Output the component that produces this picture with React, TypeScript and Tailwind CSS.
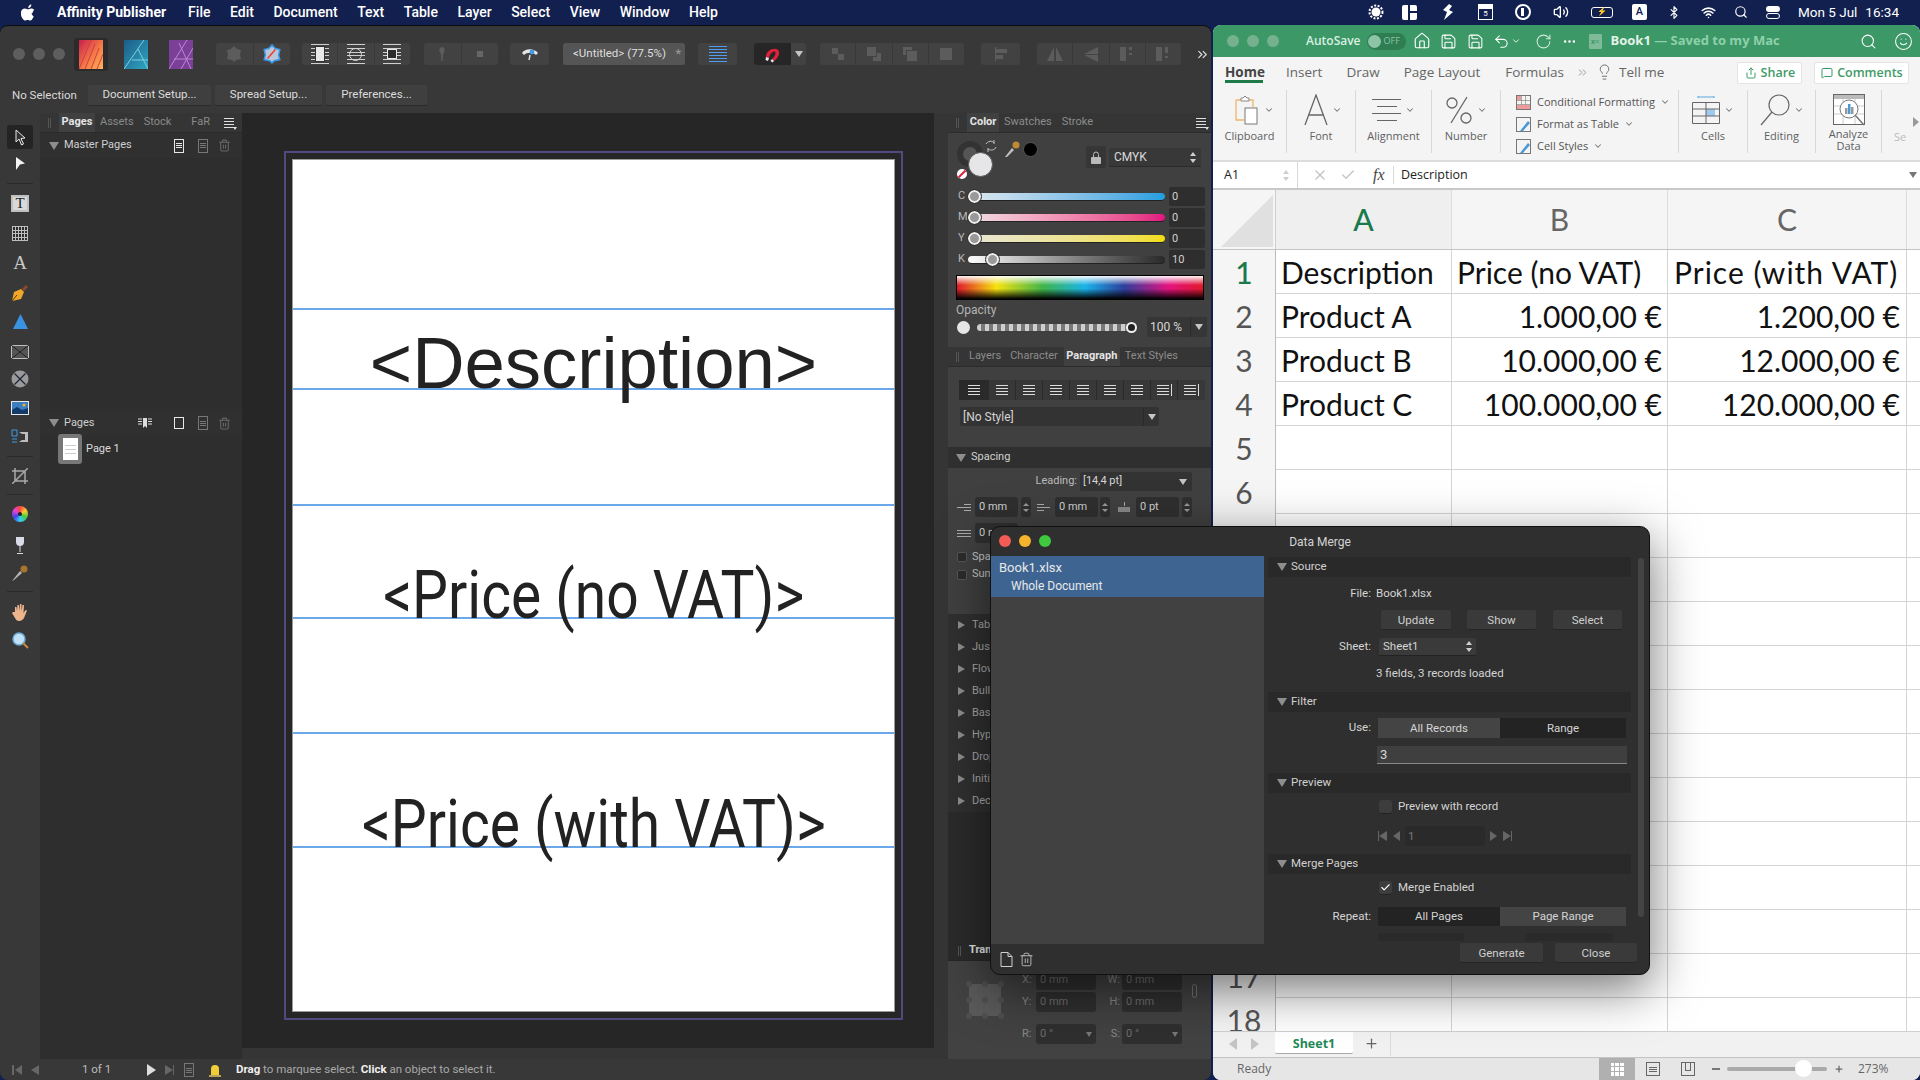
import type { ReactNode } from "react";
import {
  Bluetooth,
  Check,
  ChevronDown,
  ChevronsRight,
  Home,
  Lightbulb,
  MessageSquare,
  MoreHorizontal,
  Plus,
  RotateCw,
  Save,
  Search,
  Share,
  Smile,
  Trash2,
  Undo2,
  Volume2,
  Wifi,
  X,
} from "lucide-react";

const menus = ["File", "Edit", "Document", "Text", "Table", "Layer", "Select", "View", "Window", "Help"];

function Tri({ open = true }: { open?: boolean }) {
  return open ? (
    <div className="w-0 h-0 border-x-[5px] border-x-transparent border-t-[8px] border-t-[#8e8e8e]" />
  ) : (
    <div className="w-0 h-0 border-y-[4px] border-y-transparent border-l-[7px] border-l-[#8e8e8e]" />
  );
}

function SmallDown() {
  return <div className="w-0 h-0 border-x-[4px] border-x-transparent border-t-[6px] border-t-[#c4c4c4]" />;
}

function Stepper() {
  return (
    <div className="flex flex-col items-center justify-center gap-[3px] w-[10px] h-[20px] rounded-[3px] bg-[#303030]">
      <div className="w-0 h-0 border-x-[3px] border-x-transparent border-b-[3px] border-b-[#9a9a9a]" />
      <div className="w-0 h-0 border-x-[3px] border-x-transparent border-t-[3px] border-t-[#9a9a9a]" />
    </div>
  );
}

function UpDown() {
  return (
    <div className="flex flex-col items-center gap-[3px]">
      <div className="w-0 h-0 border-x-[3px] border-x-transparent border-b-[4px] border-b-[#cfcfcf]" />
      <div className="w-0 h-0 border-x-[3px] border-x-transparent border-t-[4px] border-t-[#cfcfcf]" />
    </div>
  );
}

function MenuIcon() {
  return (
    <div className="relative flex flex-col gap-[2px] w-[10px]">
      <div className="h-[1px] bg-[#e0e0e0]" />
      <div className="h-[1px] bg-[#e0e0e0]" />
      <div className="h-[1px] bg-[#e0e0e0]" />
      <div className="h-[1px] bg-[#e0e0e0]" />
      <div className="absolute -right-[3px] -bottom-[2px] w-0 h-0 border-x-[2px] border-x-transparent border-t-[3px] border-t-[#e0e0e0]" />
    </div>
  );
}

function PublisherLogo() {
  return (
    <svg width="24" height="29" viewBox="0 0 24 29">
      <defs>
        <linearGradient id="pub" x1="0" y1="0" x2="1" y2="1">
          <stop offset="0" stopColor="#c81e4e" />
          <stop offset=".55" stopColor="#f47a45" />
          <stop offset="1" stopColor="#ffb55a" />
        </linearGradient>
      </defs>
      <rect width="24" height="29" fill="url(#pub)" />
      <path d="M0 29 L12 0 M6 29 L16 4 M12 29 L20 8 M18 29 L24 14" stroke="#d8384a" strokeWidth="1" />
    </svg>
  );
}

function DesignerLogo() {
  return (
    <svg width="24" height="29" viewBox="0 0 24 29">
      <defs>
        <linearGradient id="des" x1="0" y1="0" x2="1" y2="1">
          <stop offset="0" stopColor="#1c5c86" />
          <stop offset="1" stopColor="#2fa6c4" />
        </linearGradient>
      </defs>
      <rect width="24" height="29" fill="url(#des)" />
      <path d="M0 29 L20 0 M8 20 L24 20 M14 9 L24 29" stroke="#7fd0dc" strokeWidth="1" fill="none" />
    </svg>
  );
}

function PhotoLogo() {
  return (
    <svg width="24" height="29" viewBox="0 0 24 29">
      <rect width="24" height="29" fill="#7b3f9a" />
      <path d="M0 29 L18 0 M5 19 L24 19 M10 3 L22 29 M24 8 L12 29" stroke="#b88ad0" strokeWidth="1" fill="none" />
    </svg>
  );
}

function Seg({ className, children }: { className: string; children: ReactNode }) {
  return <div className={`flex h-[22px] rounded-[3px] bg-[#424242] divide-x divide-[#383838] ${className}`}>{children}</div>;
}

function SegCell({ children }: { children?: ReactNode }) {
  return <div className="flex-1 flex items-center justify-center">{children}</div>;
}

function Lines({ children }: { children?: ReactNode }) {
  return (
    <div className="relative w-[18px] h-[20px] flex flex-col justify-between">
      {[0, 1, 2, 3, 4, 5].map((i) => (
        <div key={i} className="h-[1px] bg-[#cfcfcf]" />
      ))}
      <div className="absolute inset-0 flex items-center justify-center">{children}</div>
    </div>
  );
}

function Grey({ d }: { d: string }) {
  return (
    <svg width="18" height="18" viewBox="0 0 18 18">
      <path d={d} fill="#5c5c5c" />
    </svg>
  );
}

function Toolbar() {
  return (
    <div className="flex items-center h-[56px] shrink-0">
      <div className="flex gap-[8px] ml-[13px]">
        <div className="w-[12px] h-[12px] rounded-full bg-[#5e5e5e]" />
        <div className="w-[12px] h-[12px] rounded-full bg-[#5e5e5e]" />
        <div className="w-[12px] h-[12px] rounded-full bg-[#5e5e5e]" />
      </div>
      <div className="ml-[9px] w-[34px] h-[33px] rounded-[3px] bg-[#2b2b2b] flex items-center justify-center">
        <PublisherLogo />
      </div>
      <div className="ml-[16px]">
        <DesignerLogo />
      </div>
      <div className="ml-[21px]">
        <PhotoLogo />
      </div>
      <Seg className="ml-[23px] w-[74px]">
        <SegCell>
          <Grey d="M9 1 12 4 16 5 15 10 16 14 11 15 9 17 7 15 2 14 3 10 2 5 6 4Z" />
        </SegCell>
        <SegCell>
          <svg width="20" height="20" viewBox="0 0 18 18">
            <path d="M9 1 12 4 16 5 15 10 16 14 11 15 9 17 7 15 2 14 3 10 2 5 6 4Z" fill="#b9c7d8" stroke="#3a97e8" strokeWidth="1.4" />
            <path d="M5 13 12 5" stroke="#ef3b32" strokeWidth="1.3" />
          </svg>
        </SegCell>
      </Seg>
      <Seg className="ml-[12px] w-[108px]">
        <SegCell>
          <Lines>
            <div className="w-[10px] h-[16px] bg-[#e8e8e8] border border-[#333]" />
          </Lines>
        </SegCell>
        <SegCell>
          <Lines>
            <div className="w-[13px] h-[13px] rounded-full border border-[#d8d8d8]" />
          </Lines>
        </SegCell>
        <SegCell>
          <Lines>
            <div className="w-[10px] h-[10px] bg-[#2c2c2c] border border-[#e8e8e8]" />
          </Lines>
        </SegCell>
      </Seg>
      <Seg className="ml-[14px] w-[74px]">
        <SegCell>
          <Grey d="M9 2a3 3 0 0 1 2 5L10 10 9.6 16 8.4 16 8 10 7 7A3 3 0 0 1 9 2Z" />
        </SegCell>
        <SegCell>
          <div className="w-[6px] h-[6px] bg-[#666]" />
        </SegCell>
      </Seg>
      <Seg className="ml-[12px] w-[39px]">
        <SegCell>
          <svg width="18" height="14" viewBox="0 0 18 14">
            <path d="M1 6C4 1 13 1 17 6L15 8C12 5 6 5 3 8Z" fill="#e4e4e4" />
            <circle cx="11" cy="5" r="2.400" fill="#3f9be8" />
            <path d="M9 8 8 13" stroke="#e4e4e4" strokeWidth="1.4" />
          </svg>
        </SegCell>
      </Seg>
      <div className="ml-[14px] w-[122px] h-[22px] rounded-[3px] bg-[#555] flex items-center justify-between pl-[10px] pr-[4px] font-['Roboto',sans-serif] text-[11.5px] text-[#dedede]">
        <span>&lt;Untitled&gt; (77.5%)</span>
        <span className="text-[#9a9a9a] text-[13px]">*</span>
      </div>
      <Seg className="ml-[13px] w-[39px]">
        <SegCell>
          <div className="flex flex-col gap-[2px] w-[18px]">
            {[0, 1, 2, 3, 4, 5].map((i) => (
              <div key={i} className="h-[1px] bg-[#4f9cf0]" />
            ))}
          </div>
        </SegCell>
      </Seg>
      <div className="ml-[17px] flex h-[22px] w-[52px] rounded-[3px] bg-[#424242] overflow-hidden">
        <div className="w-[37px] bg-[#262626] flex items-center justify-center">
          <svg width="20" height="20" viewBox="0 0 20 20">
            <path d="M3 13C3 5 15 2 16 8c.5 3-2 7-5 9l-2-2c2-2 4-4 3.500-6.500C12 6 7 8 6 14Z" fill="#e2203a" />
            <path d="M3 13l3 1-1 3-2.500-1ZM11 17l-2-2-1.500 2 2 1.500Z" fill="#e9e9e9" />
          </svg>
        </div>
        <div className="flex-1 flex items-center justify-center">
          <SmallDown />
        </div>
      </div>
      <Seg className="ml-[14px] w-[144px]">
        <SegCell>
          <Grey d="M3 3h6v6H3ZM9 9h6v6H9Z" />
        </SegCell>
        <SegCell>
          <Grey d="M2 2h9v9H2ZM12 8h4v8H8v-4h4Z" />
        </SegCell>
        <SegCell>
          <Grey d="M2 2h9v3H5v5H2ZM6 6h10v10H6Z" />
        </SegCell>
        <SegCell>
          <Grey d="M3 3h12v12H3Z" />
        </SegCell>
      </Seg>
      <Seg className="ml-[17px] w-[39px]">
        <SegCell>
          <Grey d="M3 2h1v14H3ZM4 4h11v4H4ZM4 10h7v4H4Z" />
        </SegCell>
      </Seg>
      <Seg className="ml-[17px] w-[144px]">
        <SegCell>
          <Grey d="M8 2v14H1ZM10 2l7 14h-7Z" />
        </SegCell>
        <SegCell>
          <Grey d="M16 2v7H2ZM16 10v7L2 10Z" />
        </SegCell>
        <SegCell>
          <Grey d="M2 2h6v14H2ZM11 2h3v3h-3ZM11 8h3v2h-3Z" />
        </SegCell>
        <SegCell>
          <Grey d="M2 2h6v14H2ZM11 2h3v6h-3ZM11 11h3v2h-3Z" />
        </SegCell>
      </Seg>
      <ChevronsRight className="ml-[14px] w-[15px] h-[15px] text-[#d8d8d8]" />
    </div>
  );
}

function ContextBar() {
  const btn =
    "h-[21px] rounded-[2px] bg-[#3f3f3f] border-b border-[#2a2a2a] flex items-center justify-center font-['Roboto',sans-serif] text-[11.5px] text-[#dcdcdc]";
  return (
    <div className="flex h-[31px] pt-[3px] shrink-0 font-['Roboto',sans-serif] text-[11.5px] text-[#d8d8d8]">
      <div className="w-[88px] pl-[12px] leading-[21px] whitespace-nowrap">No Selection</div>
      <div className={`${btn} w-[123px]`}>Document Setup...</div>
      <div className={`${btn} w-[107px] ml-[4px]`}>Spread Setup...</div>
      <div className={`${btn} w-[101px] ml-[4px]`}>Preferences...</div>
    </div>
  );
}

function ToolSlot({ children, h = "h-[29px]" }: { children: ReactNode; h?: string }) {
  return <div className={`${h} flex items-center justify-center shrink-0`}>{children}</div>;
}

function ToolSep({ className }: { className: string }) {
  return <div className={`mx-[7px] h-[1px] bg-[#2a2a2a] shrink-0 ${className}`} />;
}

function Tools() {
  return (
    <div className="w-[40px] shrink-0 bg-[#383838] flex flex-col pt-[12px]">
      <div className="mx-[7px] h-[24px] rounded-[3px] bg-[#242424] flex items-center justify-center shrink-0">
        <svg width="12" height="17" viewBox="0 0 12 17">
          <path d="M2 1 2 13 5 10 7.500 16 9.500 15 7 9.500 11 9Z" fill="#333" stroke="#e8e8e8" />
        </svg>
      </div>
      <ToolSlot>
        <svg width="9" height="13" viewBox="0 0 9 13">
          <path d="M0 0 9 6.500 4 7.500 0 13Z" fill="#f4f4f4" />
        </svg>
      </ToolSlot>
      <ToolSep className="mt-[5px]" />
      <ToolSlot h="h-[39px]">
        <div className="w-[18px] h-[17px] border-2 border-[#bfbfbf] bg-[#d9d9d9] flex items-center justify-center font-['Liberation_Serif',serif] text-[15px] leading-none text-[#222]">
          T
        </div>
      </ToolSlot>
      <ToolSlot h="h-[21px]">
        <div className="grid grid-cols-5 gap-[1px] w-[16px] h-[15px] bg-[#bdbdbd] border border-[#bdbdbd]">
          {Array.from({ length: 20 }).map((_, i) => (
            <div key={i} className="bg-[#2c2c2c]" />
          ))}
        </div>
      </ToolSlot>
      <ToolSlot h="h-[39px]">
        <span className="font-['Liberation_Serif',serif] text-[19px] text-[#c8c8c8]">A</span>
      </ToolSlot>
      <ToolSlot h="h-[20px]">
        <svg width="18" height="18" viewBox="0 0 18 18">
          <path d="M1 17 3 8 10 5 13 8 10 15Z" fill="#f0a72a" />
          <path d="M1 17 6 11" stroke="#5a3a10" />
          <path d="M11 5 15 1 17 3 13 7Z" fill="#8a4a2a" />
        </svg>
      </ToolSlot>
      <ToolSlot h="h-[37px]">
        <svg width="15" height="15" viewBox="0 0 15 15">
          <path d="M7.500 0 15 15H0Z" fill="#3a93e0" />
        </svg>
      </ToolSlot>
      <ToolSlot h="h-[24px]">
        <svg width="18" height="14" viewBox="0 0 18 14">
          <rect x=".5" y=".5" width="17" height="13" fill="#555" stroke="#bdbdbd" />
          <path d="M0 0 18 14M18 0 0 14" stroke="#222" />
        </svg>
      </ToolSlot>
      <ToolSlot>
        <svg width="18" height="18" viewBox="0 0 18 18">
          <circle cx="9" cy="9" r="8.500" fill="#9a9a9a" />
          <path d="M3.500 3.500 14.500 14.500M14.500 3.500 3.500 14.500" stroke="#1d2238" strokeWidth="1.200" />
        </svg>
      </ToolSlot>
      <ToolSlot>
        <svg width="18" height="14" viewBox="0 0 18 14">
          <rect width="18" height="14" fill="#e8e8e8" />
          <rect x="1" y="1" width="16" height="12" fill="#3b7fc0" />
          <path d="M1 9 6 6 11 9 17 7V13H1Z" fill="#123a6a" />
          <circle cx="13" cy="4" r="1.500" fill="#f5b42c" />
        </svg>
      </ToolSlot>
      <ToolSlot>
        <svg width="18" height="16" viewBox="0 0 18 16">
          <path d="M1 1h5v6H1ZM1 10h5M1 13h5" fill="none" stroke="#3f9be8" />
          <path d="M8 3h9v10H8l3-2 3 0V5H11Z" fill="#bdbdbd" />
        </svg>
      </ToolSlot>
      <ToolSep className="mt-[5px]" />
      <ToolSlot h="h-[37px]">
        <svg width="16" height="16" viewBox="0 0 16 16" fill="none" stroke="#a8a8a8" strokeWidth="1.500">
          <path d="M3 0V13H16M0 3H13V16M0 16 16 0" />
        </svg>
      </ToolSlot>
      <ToolSep />
      <ToolSlot h="h-[38px]">
        <div className="w-[16px] h-[16px] rounded-full bg-[conic-gradient(#f44,#fc3,#4c4,#3cf,#44d,#d4d,#f44)] flex items-center justify-center">
          <div className="w-[4px] h-[4px] rounded-full bg-[#222]" />
        </div>
      </ToolSlot>
      <ToolSlot h="h-[26px]">
        <svg width="10" height="18" viewBox="0 0 10 18">
          <path d="M1 0H9V5C9 8 7 9 5 9S1 8 1 5ZM4.500 9H5.500V15H4.500ZM2 16H8V17H2Z" fill="#d8dbe8" />
        </svg>
      </ToolSlot>
      <ToolSlot h="h-[28px]">
        <svg width="16" height="16" viewBox="0 0 16 16">
          <path d="M0 16 8 6 10 8 2 15Z" fill="#b5b5b5" />
          <circle cx="12" cy="4" r="3.500" fill="#a8752c" />
        </svg>
      </ToolSlot>
      <ToolSep className="mt-[4px]" />
      <ToolSlot h="h-[39px]">
        <svg width="17" height="18" viewBox="0 0 17 18">
          <path d="M3 9V4h1.500l.5 4 .5-6H7l.5 6 .5-7h1.500v7l1-6h1.500l-.5 8 2-3 1.500.5L12 15c-1 2-3 3-5 3s-3-1-4-3L0 10l1-1Z" fill="#eeb48c" />
        </svg>
      </ToolSlot>
      <ToolSlot h="h-[18px]">
        <svg width="17" height="17" viewBox="0 0 17 17">
          <circle cx="7" cy="7" r="6" fill="#bfe0f5" stroke="#6aa9d8" strokeWidth="1.500" />
          <path d="M11 11 16 16" stroke="#c98a3c" strokeWidth="2" />
        </svg>
      </ToolSlot>
    </div>
  );
}

function PageIcon({ dim }: { dim?: boolean }) {
  return (
    <div className={`w-[10px] h-[14px] border flex flex-col gap-[1px] justify-center px-[1px] ${dim ? "border-[#777]" : "border-[#e6e6e6]"}`}>
      <div className={`h-[1px] ${dim ? "bg-[#777]" : "bg-[#e6e6e6]"}`} />
      <div className={`h-[1px] ${dim ? "bg-[#777]" : "bg-[#e6e6e6]"}`} />
      <div className={`h-[1px] ${dim ? "bg-[#777]" : "bg-[#e6e6e6]"}`} />
    </div>
  );
}

function LeftPanel() {
  return (
    <div className="w-[202px] shrink-0 bg-[#2e2e2e] flex flex-col font-['Roboto',sans-serif] text-[11px] text-[#cfcfcf]">
      <div className="h-[20px] bg-[#353535] border-b border-[#2a2a2a] flex items-center shrink-0 text-[#8a8a8a]">
        <div className="ml-[8px] w-[3px] h-[10px] border-x border-[#555]" />
        <div className="ml-[8px] w-[36px] h-full bg-[#404040] flex items-center justify-center font-bold text-[#e4e4e4]">Pages</div>
        <span className="ml-[5px]">Assets</span>
        <span className="ml-[10px]">Stock</span>
        <span className="ml-[20px]">FaR</span>
        <div className="ml-[14px]">
          <MenuIcon />
        </div>
      </div>
      <div className="h-[25px] bg-[#303030] flex items-center shrink-0">
        <div className="ml-[9px]">
          <Tri />
        </div>
        <span className="ml-[5px] w-[110px] whitespace-nowrap">Master Pages</span>
        <PageIcon />
        <div className="ml-[14px]">
          <PageIcon dim />
        </div>
        <Trash2 className="ml-[10px] w-[13px] h-[13px] text-[#666]" />
      </div>
      <div className="h-[253px] shrink-0" />
      <div className="h-[24px] bg-[#303030] flex items-center shrink-0">
        <div className="ml-[9px]">
          <Tri />
        </div>
        <span className="ml-[5px] w-[59px]">Pages</span>
        <svg width="14" height="10" viewBox="0 0 14 10" className="ml-[15px]">
          <path d="M0 1h4M0 3.500h4M0 6h4M10 1h4M10 3.500h4M10 6h4" stroke="#ddd" />
          <path d="M5 0h4v10l-2-2-2 2Z" fill="#ddd" />
        </svg>
        <div className="ml-[22px] w-[10px] h-[12px] border border-[#e8e8e8]" />
        <div className="ml-[14px]">
          <PageIcon dim />
        </div>
        <Trash2 className="ml-[10px] w-[13px] h-[13px] text-[#666]" />
      </div>
      <div className="flex items-center mt-[-1px] pl-[18px]">
        <div className="w-[24px] h-[30px] rounded-[3px] bg-[#777] flex items-center justify-center">
          <div className="w-[15px] h-[22px] bg-white flex flex-col justify-center gap-[3px] px-[2px]">
            <div className="h-[1px] bg-[#ccc]" />
            <div className="h-[1px] bg-[#ccc]" />
            <div className="h-[1px] bg-[#ccc]" />
          </div>
        </div>
        <span className="ml-[4px] text-[#dcdcdc]">Page 1</span>
      </div>
    </div>
  );
}

function TextFrame({ className, children }: { className: string; children: ReactNode }) {
  return (
    <div className={`border-y-2 border-[#6aa8ea] flex items-end justify-center whitespace-nowrap ${className}`}>
      {children}
    </div>
  );
}

function Canvas() {
  return (
    <div className="w-[692px] h-[935px] shrink-0 bg-[#262626] pl-[42px] pt-[38px]">
      <div className="w-[619px] h-[869px] border-2 border-[#4f4a80] p-[6px]">
        <div className="h-[853px] bg-white border border-[#999] overflow-hidden flex flex-col text-[#222]">
          <TextFrame className="mt-[148px] h-[82px]">
            <span className="font-['Liberation_Sans',sans-serif] text-[72.5px] leading-none mb-[-11px]">&lt;Description&gt;</span>
          </TextFrame>
          <TextFrame className="mt-[114px] h-[115px]">
            <span className="font-['Roboto',sans-serif] text-[67px] leading-none mb-[-12px] scale-x-[0.85] shrink-0">&lt;Price (no VAT)&gt;</span>
          </TextFrame>
          <TextFrame className="mt-[113px] h-[116px]">
            <span className="font-['Roboto',sans-serif] text-[67px] leading-none mb-[-12px] scale-x-[0.85] shrink-0">&lt;Price (with VAT)&gt;</span>
          </TextFrame>
        </div>
      </div>
    </div>
  );
}

function Slider({ label, track, pos, value }: { label: string; track: string; pos: string; value: string }) {
  return (
    <div className="h-[21px] flex items-center shrink-0">
      <span className="w-[20px] pl-[10px] text-[#b8b8b8]">{label}</span>
      <div className={`relative w-[197px] h-[8px] rounded-full border-b border-[#222] ${track}`}>
        <div className={`absolute top-[-3px] w-[13px] h-[13px] rounded-full bg-[#999] border-[2px] border-[#eee] outline outline-1 outline-[#333] ${pos}`} />
      </div>
      <div className="ml-[4px] w-[36px] h-[19px] rounded-[2px] bg-[#2e2e2e] pl-[3px] leading-[19px] text-[#d0d0d0]">{value}</div>
    </div>
  );
}

function Field({ value, w, dim }: { value: string; w: string; dim?: boolean }) {
  return <div className={`${w} h-[20px] rounded-[3px] bg-[#2f2f2f] pl-[4px] leading-[20px] shrink-0 ${dim ? "text-[#6e6e6e]" : "text-[#cfcfcf]"}`}>{value}</div>;
}

function AngleField({ value }: { value: string }) {
  return (
    <div className="w-[60px] h-[20px] rounded-[3px] bg-[#2f2f2f] flex items-center justify-between px-[4px] text-[#6e6e6e]">
      {value}
      <div className="w-0 h-0 border-x-[3px] border-x-transparent border-t-[5px] border-t-[#777]" />
    </div>
  );
}

function AlignIcon({ end }: { end?: boolean }) {
  return (
    <div className="flex items-center gap-[2px]">
      <div className="flex flex-col gap-[2px] w-[12px]">
        <div className="h-[1px] bg-[#dcdcdc]" />
        <div className="h-[1px] bg-[#dcdcdc]" />
        <div className="h-[1px] bg-[#dcdcdc]" />
        <div className="h-[1px] bg-[#dcdcdc]" />
      </div>
      {end && <div className="w-[1px] h-[12px] bg-[#dcdcdc]" />}
    </div>
  );
}

function RightPanel() {
  const collapsed = ["Tabs", "Justification", "Flow Options", "Bullets", "Baseline Grid", "Hyphenation", "Drop Caps", "Initial Words", "Decimal"];
  const alignEnds = [false, false, false, false, false, false, false, true, true];
  return (
    <div className="ml-[14px] w-[263px] shrink-0 bg-[#404040] flex flex-col font-['Roboto',sans-serif] text-[11px] text-[#c8c8c8] overflow-hidden">
      <div className="h-[20px] bg-[#353535] border-b border-[#2c2c2c] flex items-center shrink-0 text-[#8c8c8c]">
        <div className="ml-[8px] w-[3px] h-[10px] border-x border-[#555]" />
        <div className="ml-[8px] w-[32px] h-full bg-[#404040] flex items-center justify-center font-bold text-[#e4e4e4]">Color</div>
        <span className="ml-[5px]">Swatches</span>
        <span className="ml-[10px]">Stroke</span>
        <div className="ml-[103px]">
          <MenuIcon />
        </div>
      </div>
      <div className="h-[53px] flex shrink-0">
        <div className="relative w-[138px]">
          <div className="absolute left-[9px] top-[8px] w-[26px] h-[26px] rounded-full border-[6px] border-[#333] bg-[#555]" />
          <div className="absolute left-[20px] top-[19px] w-[25px] h-[25px] rounded-full bg-[#e6e6e8] border border-[#555]" />
          <div className="absolute left-[9px] top-[36px] w-[10px] h-[10px] rounded-full bg-white flex items-center justify-center overflow-hidden">
            <div className="w-[12px] h-[2px] bg-[#e2203a] -rotate-45" />
          </div>
          <svg width="14" height="14" viewBox="0 0 14 14" className="absolute left-[36px] top-[6px]" fill="none" stroke="#c0c0c0">
            <path d="M2 5C4 2 8 1 10 4M12 8C11 11 7 12 4 10M10 1V5M4 13V9" />
          </svg>
          <svg width="16" height="18" viewBox="0 0 16 18" className="absolute left-[56px] top-[7px]">
            <path d="M1 17 8 8 10 10 3 17Z" fill="#c0c0c0" />
            <circle cx="12" cy="5" r="3.500" fill="#c08a34" />
          </svg>
          <div className="absolute left-[75px] top-[9px] w-[15px] h-[15px] rounded-full bg-black border border-[#555]" />
        </div>
        <div className="mt-[13px] w-[20px] h-[22px] rounded-[2px] bg-[#363636] flex items-center justify-center">
          <svg width="10" height="13" viewBox="0 0 10 13">
            <path d="M2.500 6V3.500a2.500 2.500 0 0 1 5 0V6" fill="none" stroke="#bbb" />
            <rect y="6" width="10" height="7" rx="1" fill="#bbb" />
          </svg>
        </div>
        <div className="ml-[3px] mt-[15px] w-[92px] h-[19px] rounded-[2px] bg-[#383838] border-b border-[#2a2a2a] flex items-center justify-between px-[5px] text-[12px] text-[#d8d8d8]">
          CMYK
          <UpDown />
        </div>
      </div>
      <Slider label="C" track="bg-gradient-to-r from-[#dfe9ee] to-[#1f9ee0]" pos="left-0" value="0" />
      <Slider label="M" track="bg-gradient-to-r from-[#eedfe6] to-[#e0127f]" pos="left-0" value="0" />
      <Slider label="Y" track="bg-gradient-to-r from-[#e8e6d8] to-[#f2dd00]" pos="left-0" value="0" />
      <Slider label="K" track="bg-gradient-to-r from-[#ffffff] to-[#2a2a2a]" pos="left-[18px]" value="10" />
      <div className="relative ml-[8px] mt-[5px] w-[248px] h-[25px] border border-black bg-[linear-gradient(to_right,#e01a2c,#f6e30e_16%,#3fb54a_35%,#19b3ea_52%,#2d3f9d_68%,#e4127f_86%,#e01a2c)] shrink-0">
        <div className="absolute inset-0 bg-[linear-gradient(to_bottom,rgba(255,255,255,0.95),rgba(255,255,255,0)_40%,rgba(0,0,0,0)_55%,#000)]" />
      </div>
      <div className="h-[17px] pl-[8px] leading-[20px] text-[12px] text-[#b4b4b4] shrink-0">Opacity</div>
      <div className="h-[20px] flex items-center shrink-0">
        <div className="ml-[9px] w-[13px] h-[13px] rounded-full bg-[#e6e6e6]" />
        <div className="relative ml-[7px] w-[155px] h-[7px] rounded-full bg-[repeating-linear-gradient(90deg,#cfcfcf_0_4px,#777_4px_8px)]">
          <div className="absolute right-[-5px] top-[-2px] w-[11px] h-[11px] rounded-full bg-[#222] border-2 border-[#f0f0f0]" />
        </div>
        <div className="ml-[15px] w-[60px] h-[20px] rounded-[2px] bg-[#363636] flex items-center text-[12px] text-[#d8d8d8]">
          <span className="pl-[3px] w-[43px]">100 %</span>
          <div className="flex-1 h-full border-l border-[#2a2a2a] flex items-center justify-center">
            <SmallDown />
          </div>
        </div>
      </div>
      <div className="mt-[10px] h-[20px] bg-[#353535] border-b border-[#2c2c2c] flex items-center shrink-0 text-[#8c8c8c]">
        <div className="ml-[8px] w-[3px] h-[10px] border-x border-[#555]" />
        <span className="ml-[10px]">Layers</span>
        <span className="ml-[9px]">Character</span>
        <div className="ml-[6px] w-[56px] h-full bg-[#404040] flex items-center justify-center font-bold text-[#e4e4e4]">Paragraph</div>
        <span className="ml-[5px]">Text Styles</span>
      </div>
      <div className="ml-[11px] mt-[13px] w-[246px] h-[20px] rounded-[2px] bg-[#383838] flex divide-x divide-[#2a2a2a] shrink-0">
        {alignEnds.map((end, i) => (
          <div key={i} className={`flex items-center justify-center ${i === 0 ? "w-[30px] bg-[#2a2a2a]" : "w-[27px]"}`}>
            <AlignIcon end={end} />
          </div>
        ))}
      </div>
      <div className="ml-[12px] mt-[7px] w-[199px] h-[19px] rounded-[2px] bg-[#333] flex items-center shrink-0 text-[12px] text-[#d4d4d4]">
        <span className="pl-[3px] w-[183px]">[No Style]</span>
        <div className="flex-1 h-full border-l border-[#2a2a2a] flex items-center justify-center">
          <SmallDown />
        </div>
      </div>
      <div className="mt-[21px] h-[21px] bg-[#2f2f2f] flex items-center shrink-0 text-[#d0d0d0]">
        <div className="ml-[8px]">
          <Tri />
        </div>
        <span className="ml-[5px]">Spacing</span>
      </div>
      <div className="mt-[4px] h-[19px] flex items-center shrink-0">
        <span className="w-[132px] text-right pr-[3px] text-[#bbb]">Leading:</span>
        <div className="w-[112px] h-[19px] rounded-[2px] bg-[#333] flex items-center text-[#d4d4d4]">
          <span className="pl-[3px] w-[94px]">[14,4 pt]</span>
          <div className="flex-1 flex items-center justify-center">
            <SmallDown />
          </div>
        </div>
      </div>
      <div className="mt-[6px] h-[20px] flex items-center shrink-0">
        <div className="ml-[9px] w-[14px] flex flex-col gap-[2px] items-end">
          <div className="w-[7px] h-[1px] bg-[#aaa]" />
          <div className="w-[14px] h-[1px] bg-[#aaa]" />
          <div className="w-[7px] h-[1px] bg-[#aaa]" />
        </div>
        <div className="ml-[4px]">
          <Field value="0 mm" w="w-[43px]" />
        </div>
        <div className="ml-[3px]">
          <Stepper />
        </div>
        <div className="ml-[6px] w-[13px] flex flex-col gap-[2px]">
          <div className="w-[7px] h-[1px] bg-[#aaa]" />
          <div className="w-[13px] h-[1px] bg-[#aaa]" />
          <div className="w-[7px] h-[1px] bg-[#aaa]" />
        </div>
        <div className="ml-[5px]">
          <Field value="0 mm" w="w-[43px]" />
        </div>
        <div className="ml-[2px]">
          <Stepper />
        </div>
        <div className="ml-[8px] w-[12px] flex flex-col items-center gap-[1px]">
          <div className="w-[1px] h-[4px] bg-[#aaa]" />
          <div className="w-[12px] h-[5px] bg-[#888]" />
        </div>
        <div className="ml-[6px]">
          <Field value="0 pt" w="w-[43px]" />
        </div>
        <div className="ml-[3px]">
          <Stepper />
        </div>
      </div>
      <div className="mt-[6px] h-[20px] flex items-center shrink-0">
        <div className="ml-[9px] w-[14px] flex flex-col gap-[2px]">
          <div className="h-[1px] bg-[#aaa]" />
          <div className="h-[1px] bg-[#aaa]" />
          <div className="h-[1px] bg-[#aaa]" />
        </div>
        <div className="ml-[4px]">
          <Field value="0 mm" w="w-[43px]" />
        </div>
      </div>
      <div className="h-[18px] mt-[5px] flex items-center shrink-0">
        <div className="ml-[9px] w-[10px] h-[10px] rounded-[2px] bg-[#2c2c2c] border border-[#555]" />
        <span className="ml-[5px]">Space</span>
      </div>
      <div className="h-[17px] flex items-center shrink-0">
        <div className="ml-[9px] w-[10px] h-[10px] rounded-[2px] bg-[#2c2c2c] border border-[#555]" />
        <span className="ml-[5px]">Sum</span>
      </div>
      <div className="flex-1 mt-[31px] bg-[#2b2b2b] flex flex-col min-h-0">
        {collapsed.map((name) => (
          <div key={name} className="h-[22px] bg-[#303030] flex items-center shrink-0 text-[#aaa]">
            <div className="ml-[10px]">
              <Tri open={false} />
            </div>
            <span className="ml-[7px]">{name}</span>
          </div>
        ))}
        <div className="h-[129px] shrink-0" />
        <div className="h-[20px] bg-[#2b2b2b] border-b border-[#262626] flex items-center shrink-0">
          <div className="ml-[10px] w-[3px] h-[10px] border-x border-[#555]" />
          <span className="ml-[8px] font-bold text-[#e4e4e4]">Transform</span>
        </div>
        <div className="flex-1 bg-[#424242] flex pt-[9px]">
          <svg width="38" height="38" viewBox="0 0 38 38" className="ml-[18px] mt-[11px]">
            <rect x="3" y="3" width="32" height="32" fill="#5a5a5a" />
            <g fill="#4f4f4f">
              <circle cx="3" cy="3" r="3" />
              <circle cx="19" cy="3" r="3" />
              <circle cx="35" cy="3" r="3" />
              <circle cx="3" cy="19" r="3" />
              <circle cx="35" cy="19" r="3" />
              <circle cx="3" cy="35" r="3" />
              <circle cx="19" cy="35" r="3" />
              <circle cx="35" cy="35" r="3" />
              <circle cx="19" cy="19" r="3" />
            </g>
          </svg>
          <div className="ml-[18px] grid grid-cols-[13px_60px_24px_60px] grid-rows-[20px_20px_8px_20px] gap-x-[1px] gap-y-[2px] items-center text-[#888]">
            <span>X:</span>
            <Field dim value="0 mm" w="w-[60px]" />
            <span className="text-right pr-[1px]">W:</span>
            <Field dim value="0 mm" w="w-[60px]" />
            <span>Y:</span>
            <Field dim value="0 mm" w="w-[60px]" />
            <span className="text-right pr-[1px]">H:</span>
            <Field dim value="0 mm" w="w-[60px]" />
            <div className="col-span-4" />
            <span>R:</span>
            <AngleField value="0 °" />
            <span className="text-right pr-[1px]">S:</span>
            <AngleField value="0 °" />
          </div>
          <div className="ml-[10px] mt-[14px] w-[5px] h-[14px] rounded-full border border-[#777]" />
        </div>
      </div>
    </div>
  );
}

function StatusBar() {
  return (
    <div className="h-[22px] flex items-center shrink-0 font-['Roboto',sans-serif] text-[11.5px] text-[#a8a8a8]">
      <div className="ml-[12px] w-[2px] h-[10px] bg-[#666]" />
      <div className="ml-[1px] w-0 h-0 border-y-[5px] border-y-transparent border-r-[7px] border-r-[#666]" />
      <div className="ml-[9px] w-0 h-0 border-y-[5px] border-y-transparent border-r-[8px] border-r-[#666]" />
      <span className="ml-[43px] w-[51px] text-[#bbb] whitespace-nowrap">1 of 1</span>
      <div className="ml-[14px] w-0 h-0 border-y-[6px] border-y-transparent border-l-[9px] border-l-[#ddd]" />
      <div className="ml-[9px] w-0 h-0 border-y-[5px] border-y-transparent border-l-[8px] border-l-[#666]" />
      <div className="w-[1px] h-[10px] bg-[#666]" />
      <div className="ml-[10px]">
        <PageIcon dim />
      </div>
      <svg width="12" height="13" viewBox="0 0 12 13" className="ml-[15px]">
        <path d="M2 11V5a4 4 0 0 1 8 0v6Z" fill="#f2cd3a" />
        <rect y="11" width="12" height="2" fill="#b5a45a" />
      </svg>
      <span className="ml-[15px] whitespace-nowrap">
        <b className="text-[#eee]">Drag</b> to marquee select. <b className="text-[#eee]">Click</b> an object to select it.
      </span>
    </div>
  );
}

function AffinityWindow() {
  return (
    <div className="w-[1211px] h-[1055px] shrink-0 rounded-[8px] bg-[#383838] border-t border-[#0c0c0c] flex flex-col overflow-hidden">
      <Toolbar />
      <ContextBar />
      <div className="flex h-[946px] shrink-0 bg-[#353535]">
        <Tools />
        <LeftPanel />
        <Canvas />
        <RightPanel />
      </div>
      <StatusBar />
    </div>
  );
}

function GroupLabel({ children }: { children: ReactNode }) {
  return <div className="text-center text-[11px] leading-[12px] text-[#5f5f5f]">{children}</div>;
}

function RibbonGroup({ w, children, label }: { w: string; children: ReactNode; label: ReactNode }) {
  return (
    <div className={`${w} h-[63px] border-r border-[#d8d8d8] flex flex-col items-center shrink-0`}>
      <div className="h-[40px] flex items-center justify-center gap-[4px]">{children}</div>
      <GroupLabel>{label}</GroupLabel>
    </div>
  );
}

function Chev({ className = "" }: { className?: string }) {
  return <ChevronDown strokeWidth={2.500} className={`w-[10px] h-[10px] text-[#777] ${className}`} />;
}

function MiniTable({ kind }: { kind: "cf" | "table" | "style" }) {
  return (
    <div className="relative grid grid-cols-3 grid-rows-3 w-[15px] h-[15px] border border-[#777] divide-[#999]">
      {kind === "cf" && <div className="col-span-1 row-span-1 bg-[#ec9a9a]" />}
      {kind !== "cf" && (
        <svg width="11" height="11" viewBox="0 0 11 11" className="absolute right-0 bottom-0">
          <path d="M1 11 9 1 11 3 4 11Z" fill="#4a9ad8" />
        </svg>
      )}
      {kind === "cf" && (
        <svg width="13" height="13" viewBox="0 0 13 13" className="absolute inset-0">
          <path d="M0 4.500H13M0 8.500H13M4.500 0V13M8.500 0V13" stroke="#888" strokeWidth=".7" />
          <rect y="9" width="13" height="4" fill="#ec9a9a" />
        </svg>
      )}
    </div>
  );
}

function Ribbon() {
  return (
    <div className="h-[70px] bg-[#f4f4f4] flex shrink-0 font-['Open_Sans',sans-serif]">
      <RibbonGroup w="w-[74px]" label="Clipboard">
        <svg width="27" height="30" viewBox="0 0 27 30" fill="none" className="ml-[8px]">
          <path d="M3 5H8M16 5H20V12M3 5V25H11" stroke="#f0b56e" strokeWidth="1.300" />
          <path d="M8 6V3H10L12 1 14 3H16V6Z" stroke="#888" fill="#fff" />
          <rect x="12" y="13" width="12" height="16" stroke="#777" fill="#fff" />
        </svg>
        <Chev />
      </RibbonGroup>
      <RibbonGroup w="w-[69px]" label="Font">
        <svg width="24" height="32" viewBox="0 0 24 32" fill="none" stroke="#666" strokeWidth="1.300" className="ml-[3px]">
          <path d="M1 31 12 1 23 31M5 21H19" />
        </svg>
        <Chev />
      </RibbonGroup>
      <RibbonGroup w="w-[76px]" label="Alignment">
        <div className="flex flex-col items-center gap-[6px]">
          <div className="w-[29px] h-[1px] bg-[#666]" />
          <div className="w-[20px] h-[1px] bg-[#666]" />
          <div className="w-[29px] h-[1px] bg-[#666]" />
          <div className="w-[20px] h-[1px] bg-[#666]" />
        </div>
        <Chev />
      </RibbonGroup>
      <RibbonGroup w="w-[69px]" label="Number">
        <svg width="28" height="30" viewBox="0 0 28 30" fill="none" stroke="#666" strokeWidth="1.300">
          <circle cx="7" cy="8" r="5" />
          <ellipse cx="21" cy="23" rx="5" ry="5" />
          <path d="M22 2 6 28" />
        </svg>
        <Chev />
      </RibbonGroup>
      <div className="w-[178px] h-[63px] border-r border-[#d8d8d8] flex flex-col gap-[6px] pl-[15px] pt-[4px] text-[11px] text-[#555] shrink-0">
        <div className="flex items-center h-[16px]">
          <MiniTable kind="cf" />
          <span className="ml-[6px] whitespace-nowrap">Conditional Formatting</span>
          <Chev className="ml-[5px]" />
        </div>
        <div className="flex items-center h-[16px]">
          <MiniTable kind="table" />
          <span className="ml-[6px] whitespace-nowrap">Format as Table</span>
          <Chev className="ml-[5px]" />
        </div>
        <div className="flex items-center h-[16px]">
          <MiniTable kind="style" />
          <span className="ml-[6px] whitespace-nowrap">Cell Styles</span>
          <Chev className="ml-[5px]" />
        </div>
      </div>
      <RibbonGroup w="w-[69px]" label="Cells">
        <svg width="28" height="28" viewBox="0 0 28 28" fill="none">
          <path d="M6 1H22M6 0V2M22 0V2" stroke="#5aa7e0" />
          <rect x="14" y="13" width="9" height="7" fill="#9cc9ee" />
          <path d="M.5 6.500H27.500V27.500H.5ZM.5 13H27.500M.5 20H27.500M14 6.500V27.500" stroke="#666" />
        </svg>
        <Chev />
      </RibbonGroup>
      <RibbonGroup w="w-[68px]" label="Editing">
        <svg width="30" height="32" viewBox="0 0 30 32" fill="none" stroke="#666" strokeWidth="1.200">
          <circle cx="19" cy="11" r="10" />
          <path d="M12 18 1 31" />
        </svg>
        <Chev />
      </RibbonGroup>
      <div className="w-[66px] h-[63px] border-r border-[#d8d8d8] flex flex-col items-center shrink-0">
        <svg width="32" height="32" viewBox="0 0 32 32" fill="none" className="mt-[4px]">
          <rect x=".5" y=".5" width="31" height="30" stroke="#666" fill="#fff" />
          <rect x="1" y="1" width="30" height="4" fill="#bbb" />
          <path d="M1 12H31M1 20H31M10 5V30M22 5V30" stroke="#ccc" />
          <circle cx="16" cy="15" r="9" fill="#fff" stroke="#777" />
          <rect x="12" y="14" width="2.500" height="6" fill="#999" />
          <rect x="15" y="10" width="2.500" height="10" fill="#4a9ad8" />
          <rect x="18" y="13" width="2.500" height="7" fill="#999" />
          <path d="M22 21 31 31" stroke="#777" strokeWidth="1.500" />
        </svg>
        <div className="mt-[2px]">
          <GroupLabel>
            Analyze
            <br />
            Data
          </GroupLabel>
        </div>
      </div>
      <div className="flex-1 flex items-center h-[63px] pl-[12px] text-[11px] text-[#bbb]">
        <span className="mt-[32px]">Se</span>
        <div className="ml-[7px] w-0 h-0 border-y-[5px] border-y-transparent border-l-[6px] border-l-[#999]" />
      </div>
    </div>
  );
}

const rows: Record<number, string[]> = {
  1: ["Description", "Price (no VAT)", "Price (with VAT)"],
  2: ["Product A", "1.000,00 €", "1.200,00 €"],
  3: ["Product B", "10.000,00 €", "12.000,00 €"],
  4: ["Product C", "100.000,00 €", "120.000,00 €"],
};

function Sheet() {
  const numbers = Array.from({ length: 18 }, (_, i) => i + 1);
  return (
    <div className="h-[841px] overflow-hidden shrink-0 bg-white font-['Lato',sans-serif]">
      <div className="grid grid-cols-[63px_176px_216px_239px_13px] h-[60px] border-b border-[#c4c4c4] bg-[#f5f5f5] text-[#666] text-[30px]">
        <div className="border-r border-[#cfcfcf] flex items-end justify-end p-[2px]">
          <div className="w-0 h-0 border-b-[52px] border-b-[#e0e0e0] border-l-[52px] border-l-transparent" />
        </div>
        <div className="border-r border-[#dcdcdc] bg-[#efefef] flex items-center justify-center text-[#1a7a4c] font-medium">A</div>
        <div className="border-r border-[#dcdcdc] flex items-center justify-center">B</div>
        <div className="border-r border-[#dcdcdc] flex items-center justify-center">C</div>
        <div />
      </div>
      {numbers.map((n) => {
        const cells = rows[n] ?? ["", "", ""];
        return (
          <div key={n} className="grid grid-cols-[63px_176px_216px_239px_13px] h-[44px] border-b border-[#d4d4d4] text-[30px] text-[#111] leading-[44px] whitespace-nowrap">
            <div className={`border-r border-[#bcbcbc] text-center bg-[#f5f5f5] ${n === 1 ? "text-[#1a7a4c] font-medium bg-[#efefef]" : "text-[#555]"}`}>{n}</div>
            <div className="border-r border-[#d4d4d4] pl-[5px] overflow-hidden">{cells[0]}</div>
            <div className={`border-r border-[#d4d4d4] pr-[5px] ${n === 1 ? "pl-[5px]" : "text-right"}`}>{cells[1]}</div>
            <div className={`border-r border-[#d4d4d4] pr-[6px] ${n === 1 ? "pl-[6px] tracking-[1px]" : "text-right"}`}>{cells[2]}</div>
            <div />
          </div>
        );
      })}
    </div>
  );
}

function ExcelWindow() {
  return (
    <div className="ml-[2px] w-[707px] h-[1055px] shrink-0 rounded-[8px] bg-white flex flex-col overflow-hidden font-['Open_Sans',sans-serif]">
      <div className="h-[32px] bg-[#3c9866] flex items-center shrink-0 text-white">
        <div className="flex gap-[8px] ml-[14px]">
          <div className="w-[12px] h-[12px] rounded-full bg-[#75b18f]" />
          <div className="w-[12px] h-[12px] rounded-full bg-[#75b18f]" />
          <div className="w-[12px] h-[12px] rounded-full bg-[#75b18f]" />
        </div>
        <span className="ml-[27px] text-[12px] font-semibold text-[#d9efe2]">AutoSave</span>
        <div className="ml-[6px] w-[39px] h-[17px] rounded-full bg-[#2f7d53] flex items-center pl-[1px]">
          <div className="w-[13px] h-[13px] rounded-full bg-[#8cc4a5]" />
          <span className="ml-[3px] text-[9px] text-[#8cc4a5]">OFF</span>
        </div>
        <Home strokeWidth={1.500} className="ml-[7px] w-[18px] h-[18px]" />
        <Save strokeWidth={1.500} className="ml-[9px] w-[17px] h-[17px]" />
        <Save strokeWidth={1.500} className="ml-[10px] w-[17px] h-[17px]" />
        <Undo2 strokeWidth={1.500} className="ml-[9px] w-[17px] h-[17px]" />
        <ChevronDown className="ml-[1px] w-[10px] h-[10px]" />
        <RotateCw strokeWidth={1.500} className="ml-[14px] w-[17px] h-[17px] text-[#cfe8da]" />
        <MoreHorizontal className="ml-[10px] w-[15px] h-[15px]" />
        <div className="ml-[12px] w-[13px] h-[15px] rounded-[1px] bg-[#7fbb99] text-[7px] text-[#3c9866] font-bold text-center leading-[15px]">x≡</div>
        <span className="ml-[9px] text-[13px] font-bold whitespace-nowrap text-[#e4f3ea]">
          Book1 <span className="text-[#8fd0ab]">— Saved to my Mac</span>
        </span>
        <Search strokeWidth={1.500} className="ml-[80px] w-[17px] h-[17px]" />
        <Smile strokeWidth={1.300} className="ml-[17px] w-[19px] h-[19px]" />
      </div>
      <div className="h-[33px] bg-[#f4f4f4] flex shrink-0 text-[13.5px] text-[#666]">
        <div className="ml-[12px] w-[38px] h-[26px] border-b-[3px] border-[#1f7a4a] font-bold text-center leading-[30px] text-[#444]">Home</div>
        <span className="ml-[23px] leading-[30px]">Insert</span>
        <span className="ml-[24px] leading-[30px]">Draw</span>
        <span className="ml-[24px] leading-[30px]">Page Layout</span>
        <span className="ml-[25px] leading-[30px]">Formulas</span>
        <ChevronsRight className="ml-[12px] mt-[9px] w-[13px] h-[13px] text-[#bbb]" />
        <Lightbulb strokeWidth={1.300} className="ml-[7px] mt-[6px] w-[17px] h-[18px] text-[#666]" />
        <span className="ml-[6px] leading-[30px]">Tell me</span>
        <div className="ml-[73px] mt-[5px] w-[65px] h-[22px] rounded-[2px] bg-white border border-[#e4e4e4] flex items-center justify-center gap-[4px] text-[#3f9a68] font-semibold text-[12.5px]">
          <Share className="w-[12px] h-[12px]" />
          Share
        </div>
        <div className="ml-[12px] mt-[5px] w-[95px] h-[22px] rounded-[2px] bg-white border border-[#e4e4e4] flex items-center justify-center gap-[4px] text-[#3f9a68] font-semibold text-[12.5px]">
          <MessageSquare className="w-[12px] h-[12px]" />
          Comments
        </div>
      </div>
      <Ribbon />
      <div className="h-[30px] border-y-2 border-[#c8c8c8] bg-white flex items-center shrink-0 text-[12.5px] text-[#222] border-t-[#dcdcdc]">
        <span className="w-[70px] pl-[11px]">A1</span>
        <UpDown />
        <div className="ml-[8px] w-[1px] h-full bg-[#d8d8d8]" />
        <X className="ml-[14px] w-[16px] h-[16px] text-[#c4c4c4]" />
        <Check className="ml-[12px] w-[16px] h-[16px] text-[#c4c4c4]" />
        <span className="ml-[17px] w-[20px] font-['Liberation_Serif',serif] italic text-[16px] text-[#444]">fx</span>
        <div className="ml-[0px] w-[1px] h-[18px] bg-[#d8d8d8]" />
        <span className="ml-[7px] w-[500px]">Description</span>
        <div className="ml-[8px] w-0 h-0 border-x-[4px] border-x-transparent border-t-[6px] border-t-[#777]" />
      </div>
      <Sheet />
      <div className="h-[26px] bg-[#f1f1f1] border-t border-[#d0d0d0] flex shrink-0">
        <div className="ml-[16px] mt-[6px] w-0 h-0 border-y-[6px] border-y-transparent border-r-[8px] border-r-[#c4c4c4]" />
        <div className="ml-[14px] mt-[6px] w-0 h-0 border-y-[6px] border-y-transparent border-l-[8px] border-l-[#c4c4c4]" />
        <div className="ml-[16px] w-[78px] h-[22px] bg-white rounded-b-[2px] border-b border-[#aaa] text-center text-[12.5px] font-bold text-[#1f8a55] leading-[24px]">Sheet1</div>
        <Plus className="ml-[11px] mt-[4px] w-[15px] h-[15px] text-[#666]" />
        <div className="ml-[11px] w-[1px] h-[24px] bg-[#dcdcdc]" />
      </div>
      <div className="flex-1 bg-[#e6e6e6] border-t border-[#c4c4c4] flex items-center text-[12px] text-[#666]">
        <span className="ml-[24px] w-[362px]">Ready</span>
        <div className="w-[36px] h-full bg-[#b0b0b0] flex items-center justify-center">
          <div className="grid grid-cols-3 grid-rows-3 gap-[1px] w-[13px] h-[13px]">
            {Array.from({ length: 9 }).map((_, i) => (
              <div key={i} className="bg-white" />
            ))}
          </div>
        </div>
        <div className="ml-[11px] w-[14px] h-[14px] border border-[#666] flex flex-col justify-center gap-[1px] px-[2px]">
          <div className="h-[1px] bg-[#666]" />
          <div className="h-[1px] bg-[#666]" />
          <div className="h-[1px] bg-[#666]" />
        </div>
        <div className="ml-[21px] w-[14px] h-[14px] border border-[#666] flex justify-center">
          <div className="w-[6px] h-[8px] border border-t-0 border-[#666]" />
        </div>
        <span className="ml-[17px] w-[8px] h-[2px] bg-[#777]" />
        <div className="relative ml-[7px] w-[100px] h-[4px] rounded-full bg-[#aaa]">
          <div className="absolute left-[68px] top-[-7px] w-[17px] h-[17px] rounded-full bg-white" />
        </div>
        <Plus strokeWidth={3} className="ml-[7px] w-[10px] h-[10px] text-[#666]" />
        <span className="ml-[14px]">273%</span>
      </div>
    </div>
  );
}

function SectionHead({ label, className = "" }: { label: string; className?: string }) {
  return (
    <div className={`ml-[4px] w-[363px] h-[20px] bg-[#292929] flex items-center shrink-0 text-[#d0d0d0] ${className}`}>
      <div className="ml-[9px]">
        <Tri />
      </div>
      <span className="ml-[4px]">{label}</span>
    </div>
  );
}

function DlgButton({ label, className }: { label: string; className: string }) {
  return <div className={`h-[20px] rounded-[2px] bg-[#3a3a3a] border-b border-[#252525] text-center leading-[20px] text-[#cfcfcf] shrink-0 ${className}`}>{label}</div>;
}

function Checkbox({ checked }: { checked?: boolean }) {
  return (
    <div className="w-[13px] h-[14px] rounded-[3px] bg-[#3d3d3d] border-b border-[#222] flex items-center justify-center">
      {checked && <Check strokeWidth={2.500} className="w-[11px] h-[11px] text-white" />}
    </div>
  );
}

function DataMerge() {
  return (
    <div className="absolute left-[990px] top-[502px] w-[660px] h-[449px] rounded-[10px] bg-[#2f2f2f] border border-[#111] shadow-[0_14px_50px_rgba(0,0,0,0.55)] flex flex-col overflow-hidden font-['Roboto',sans-serif] text-[11.5px] text-[#d4d4d4]">
      <div className="relative h-[29px] flex items-center justify-center shrink-0 text-[12px]">
        <div className="absolute left-[8px] top-[8px] flex gap-[8px]">
          <div className="w-[12px] h-[12px] rounded-full bg-[#f25c54]" />
          <div className="w-[12px] h-[12px] rounded-full bg-[#f6b42c]" />
          <div className="w-[12px] h-[12px] rounded-full bg-[#3fc93f]" />
        </div>
        Data Merge
      </div>
      <div className="flex-1 flex min-h-0">
        <div className="w-[273px] flex flex-col shrink-0">
          <div className="h-[41px] bg-[#3e6592] pl-[8px] pt-[3px] text-[#e8e8e8]">
            <div className="text-[13px] leading-[18px]">Book1.xlsx</div>
            <div className="pl-[12px] text-[12px] leading-[18px]">Whole Document</div>
          </div>
          <div className="flex-1 bg-[#414141]" />
          <div className="h-[30px] flex items-center pl-[9px] gap-[6px] text-[#cfcfcf]">
            <svg width="13" height="15" viewBox="0 0 13 15" fill="none" stroke="#cfcfcf">
              <path d="M1 .5H8L12 4.500V14.500H1ZM8 .5V4.500H12" />
            </svg>
            <Trash2 strokeWidth={1.300} className="w-[15px] h-[15px]" />
          </div>
        </div>
        <div className="relative flex-1 flex flex-col min-w-0">
          <div className="h-[385px] overflow-hidden flex flex-col">
            <SectionHead label="Source" className="mt-[1px]" />
            <div className="h-[33px] flex items-center shrink-0">
              <span className="w-[107px] text-right">File:</span>
              <span className="ml-[5px]">Book1.xlsx</span>
            </div>
            <div className="flex shrink-0">
              <DlgButton label="Update" className="ml-[117px] w-[70px]" />
              <DlgButton label="Show" className="ml-[16px] w-[69px]" />
              <DlgButton label="Select" className="ml-[17px] w-[69px]" />
            </div>
            <div className="mt-[8px] h-[18px] flex items-center shrink-0">
              <span className="w-[107px] text-right">Sheet:</span>
              <div className="ml-[8px] w-[97px] h-[18px] rounded-[2px] bg-[#3a3a3a] border-b border-[#222] flex items-center justify-between px-[4px]">
                Sheet1
                <UpDown />
              </div>
            </div>
            <div className="h-[36px] flex items-center pl-[112px] shrink-0">3 fields, 3 records loaded</div>
            <SectionHead label="Filter" />
            <div className="mt-[6px] h-[20px] flex items-center shrink-0">
              <span className="w-[107px] text-right">Use:</span>
              <div className="ml-[7px] w-[248px] h-[20px] flex">
                <div className="w-[122px] bg-[#444] text-center leading-[20px]">All Records</div>
                <div className="flex-1 bg-[#232323] text-center leading-[20px]">Range</div>
              </div>
            </div>
            <div className="ml-[113px] mt-[8px] w-[250px] h-[18px] bg-[#3f3f3f] border-b border-[#888] pl-[3px] leading-[18px] text-[13px] shrink-0">3</div>
            <SectionHead label="Preview" className="mt-[9px]" />
            <div className="mt-[7px] h-[14px] flex items-center pl-[115px] shrink-0">
              <Checkbox />
              <span className="ml-[6px]">Preview with record</span>
            </div>
            <div className="mt-[12px] h-[20px] flex items-center pl-[114px] shrink-0">
              <div className="w-[1px] h-[10px] bg-[#666]" />
              <div className="w-0 h-0 border-y-[5px] border-y-transparent border-r-[8px] border-r-[#666]" />
              <div className="ml-[6px] w-0 h-0 border-y-[5px] border-y-transparent border-r-[7px] border-r-[#666]" />
              <div className="ml-[5px] w-[80px] h-[20px] rounded-[2px] bg-[#2a2a2a] pl-[3px] leading-[20px] text-[#777]">1</div>
              <div className="ml-[5px] w-0 h-0 border-y-[5px] border-y-transparent border-l-[7px] border-l-[#666]" />
              <div className="ml-[6px] w-0 h-0 border-y-[5px] border-y-transparent border-l-[8px] border-l-[#666]" />
              <div className="w-[1px] h-[10px] bg-[#666]" />
            </div>
            <SectionHead label="Merge Pages" className="mt-[8px]" />
            <div className="mt-[7px] h-[14px] flex items-center pl-[115px] shrink-0">
              <Checkbox checked />
              <span className="ml-[6px]">Merge Enabled</span>
            </div>
            <div className="mt-[12px] h-[19px] flex items-center shrink-0">
              <span className="w-[107px] text-right">Repeat:</span>
              <div className="ml-[7px] w-[248px] h-[19px] flex">
                <div className="w-[122px] bg-[#232323] text-center leading-[19px]">All Pages</div>
                <div className="flex-1 bg-[#444] text-center leading-[19px]">Page Range</div>
              </div>
            </div>
            <div className="mt-[7px] h-[20px] flex shrink-0">
              <div className="ml-[114px] w-[86px] h-[20px] rounded-[2px] bg-[#2a2a2a]" />
              <div className="ml-[61px] w-[88px] h-[20px] rounded-[2px] bg-[#2a2a2a]" />
            </div>
          </div>
          <div className="flex justify-end pr-[12px] pt-[2px]">
            <DlgButton label="Generate" className="w-[83px]" />
            <DlgButton label="Close" className="ml-[12px] w-[82px]" />
          </div>
          <div className="absolute right-[5px] top-[2px] w-[6px] h-[359px] rounded-full bg-[#444]" />
        </div>
      </div>
    </div>
  );
}

function MenuBar() {
  return (
    <div className="h-[24px] bg-[#12204f] flex items-center shrink-0 font-['Roboto',sans-serif] text-[14px] text-white">
      <svg width="14" height="17" viewBox="0 0 14 17" className="ml-[21px]">
        <path
          d="M11.600 9c0-2 1.600-3 1.700-3-1-1.400-2.400-1.600-3-1.600-1.300-.1-2.500.8-3.100.8S5 4.400 3.900 4.400C2.500 4.400 1.200 5.200.5 6.500c-1.400 2.500-.4 6.100 1 8.100.7 1 1.500 2.100 2.500 2 1 0 1.400-.6 2.600-.6s1.500.6 2.600.6 1.800-1 2.400-2c.8-1.100 1.100-2.200 1.100-2.300 0 0-2.100-.8-2.100-3.300ZM9.500 3c.6-.7.900-1.600.8-2.500-.8 0-1.700.5-2.300 1.200-.5.600-.9 1.500-.8 2.400.9.100 1.700-.4 2.300-1.100Z"
          fill="#fff"
        />
      </svg>
      <span className="ml-[22px] font-bold">Affinity Publisher</span>
      <div className="ml-[22px] flex gap-[19.5px] font-medium">
        {menus.map((m) => (
          <span key={m}>{m}</span>
        ))}
      </div>
      <svg width="16" height="16" viewBox="0 0 16 16" className="ml-[650px]">
        <circle cx="8" cy="8" r="4.500" fill="#fff" />
        <circle cx="8" cy="8" r="6.500" fill="none" stroke="#fff" strokeWidth="2" strokeDasharray="2 1.500" />
      </svg>
      <div className="ml-[18px] grid grid-cols-2 gap-[2px] w-[15px] h-[15px]">
        <div className="bg-white row-span-2 rounded-l-[2px]" />
        <div className="bg-white rounded-tr-[2px]" />
        <div className="bg-white rounded-br-[2px]" />
      </div>
      <svg width="14" height="16" viewBox="0 0 14 16" className="ml-[24px]">
        <path d="M8 0 2 6 6 8 3 16 12 8 8 6 11 2Z" fill="#fff" />
      </svg>
      <div className="ml-[23px] w-[15px] h-[16px] border border-white bg-[#12204f]">
        <div className="h-[4px] bg-white" />
        <div className="text-[8px] leading-[10px] text-center">5</div>
      </div>
      <div className="ml-[22px] w-[16px] h-[16px] rounded-full border-2 border-white flex items-center justify-center">
        <div className="w-[3px] h-[8px] bg-white" />
      </div>
      <Volume2 strokeWidth={2} className="ml-[21px] w-[18px] h-[16px]" />
      <div className="ml-[21px] w-[22px] h-[11px] rounded-[3px] border border-white flex items-center justify-center text-[8px]">⚡</div>
      <div className="ml-[19px] w-[15px] h-[16px] rounded-[2px] bg-white text-[#12204f] text-[11px] font-medium text-center leading-[16px]">A</div>
      <Bluetooth strokeWidth={2} className="ml-[20px] w-[14px] h-[15px]" />
      <Wifi strokeWidth={2.500} className="ml-[19px] w-[17px] h-[15px]" />
      <Search strokeWidth={2} className="ml-[17px] w-[14px] h-[14px]" />
      <div className="ml-[18px] flex flex-col gap-[1px]">
        <div className="w-[14px] h-[6px] rounded-full bg-white" />
        <div className="w-[14px] h-[6px] rounded-full border border-white" />
      </div>
      <span className="ml-[18px] whitespace-nowrap text-[13.5px]">Mon 5 Jul</span>
      <span className="ml-[8px] whitespace-nowrap text-[13.5px]">16:34</span>
    </div>
  );
}

export default function App() {
  return (
    <div className="w-[1920px] h-[1080px] bg-[#12204f] flex flex-col overflow-hidden">
      <MenuBar />
      <div className="relative flex-1 flex pt-[1px]">
        <AffinityWindow />
        <ExcelWindow />
        <DataMerge />
      </div>
    </div>
  );
}
